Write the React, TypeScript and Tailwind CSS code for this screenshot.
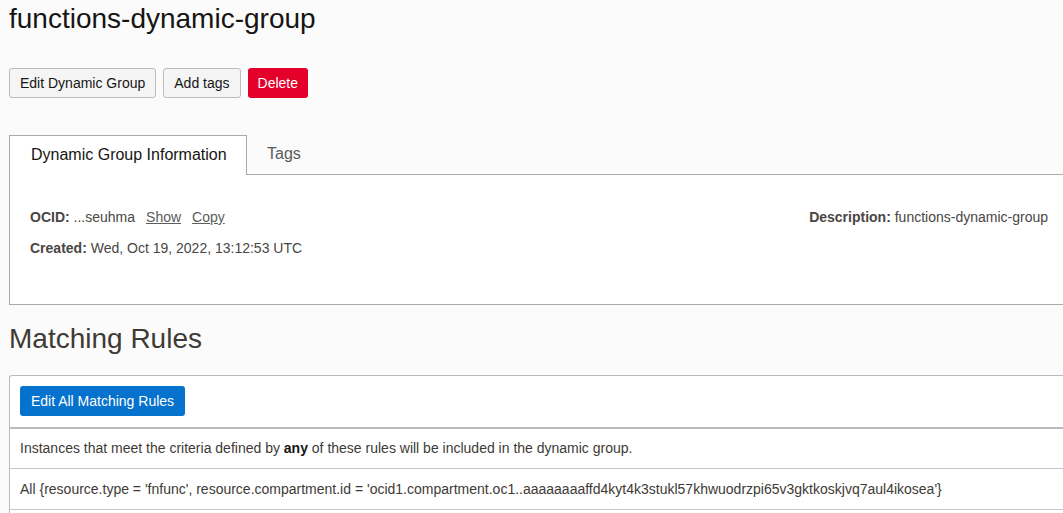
import React from 'react';

const font = { fontFamily: '"Liberation Sans", Arial, sans-serif' };

const GrayButton = ({ children }: { children: React.ReactNode }) => (
   <button className="h-[30px] px-[10px] rounded-[3px] border border-[#b8bcc0] bg-[#f5f5f6] text-[14px] text-[#161513]">
      {children}
   </button>
);

const App = () => {
   return (
      <div className="min-h-screen w-[1063px] overflow-hidden bg-[#fbfbfb] pl-[9px] text-[#161513]" style={font}>
         <h1 className="pt-[3px] text-[28px] leading-[32px] text-[#161513]">functions-dynamic-group</h1>

         <div className="mt-[33px] flex gap-[7px]">
            <GrayButton>Edit Dynamic Group</GrayButton>
            <GrayButton>Add tags</GrayButton>
            <button className="h-[30px] px-[10px] rounded-[3px] bg-[#e4002b] text-[14px] text-white">Delete</button>
         </div>

         {/* tabs */}
         <div className="mt-[37px] flex">
            <div className="h-[40px] w-[238px] border-l border-t border-r border-[#aaaaaa] bg-white pl-[21px] pt-[7px] text-[16px] text-[#161513]">
               Dynamic Group Information
            </div>
            <div className="flex-1 border-b border-[#aaaaaa] h-[40px] pl-[20px] pt-[7px] text-[16px] text-[#5a5a5a]">Tags</div>
         </div>
         <div className="h-[130px] border-l border-b border-[#aaaaaa] bg-white pl-[20px] pr-[15px] pt-[32px] text-[14px]">
            <div className="flex justify-between">
               <div className="text-[#4a4643]">
                  <span className="font-bold">OCID:</span> ...seuhma
                  <a className="ml-[11px] underline text-[#5c5c5c] cursor-pointer">Show</a>
                  <a className="ml-[11px] underline text-[#5c5c5c] cursor-pointer">Copy</a>
               </div>
               <div className="text-[#4a4643]">
                  <span className="font-bold">Description:</span> functions-dynamic-group
               </div>
            </div>
            <div className="mt-[10px] text-[#4a4643]">
               <span className="font-bold">Created:</span> Wed, Oct 19, 2022, 13:12:53 UTC
            </div>
         </div>

         <h2 className="mt-[17px] text-[28px] leading-[34px] text-[#3e3a36]">Matching Rules</h2>

         <div className="mt-[19px] rounded-tl-[3px] border-l border-t border-[#b8bcc0] bg-white text-[14px] text-[#3e3a36]">
            <div className="px-[10px] pt-[10px] pb-[11px]">
               <button className="h-[30px] w-[165px] rounded-[3px] bg-[#0572ce] text-[14px] text-white">Edit All Matching Rules</button>
            </div>
            <div className="border-t-2 border-[#b8bcc0] px-[10px] h-[41px] flex items-center">
               <span>
                  Instances that meet the criteria defined by <span className="font-bold text-[#161513]">any</span> of these rules will be included in the dynamic group.
               </span>
            </div>
            <div className="border-t border-[#c4c7ca] px-[10px] h-[41px] flex items-center whitespace-nowrap">
               All {'{'}resource.type = 'fnfunc', resource.compartment.id = 'ocid1.compartment.oc1..aaaaaaaaffd4kyt4k3stukl57khwuodrzpi65v3gktkoskjvq7aul4ikosea'{'}'}
            </div>
            <div className="border-t border-[#c4c7ca] h-[20px]" />
         </div>
      </div>
   );
};

export default App;
